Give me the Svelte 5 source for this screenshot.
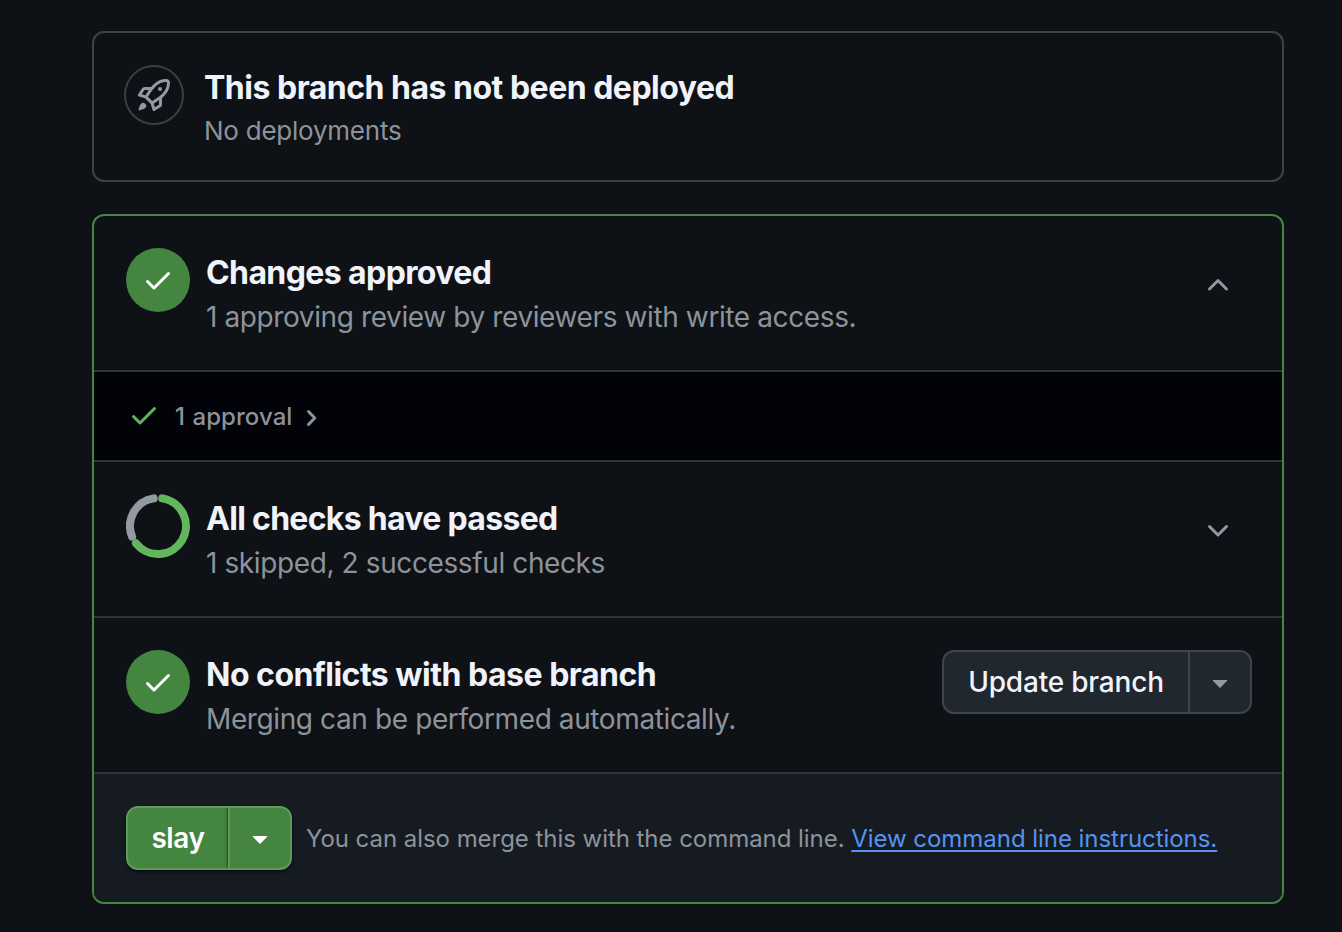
<script lang="ts">
  const check =
    'M13.78 4.22a.75.75 0 0 1 0 1.06l-7.25 7.25a.75.75 0 0 1-1.06 0L2.22 9.28a.751.751 0 0 1 .018-1.042.751.751 0 0 1 1.042-.018L6 10.94l6.72-6.72a.75.75 0 0 1 1.06 0Z';
  const rocket =
    'M14.064 0h.186C15.216 0 16 .784 16 1.75v.186a8.752 8.752 0 0 1-2.564 6.186l-.458.459c-.314.314-.641.616-.979.904v3.207c0 .608-.315 1.172-.833 1.49l-2.774 1.707a.749.749 0 0 1-1.11-.418l-.954-3.102a1.214 1.214 0 0 1-.145-.125L3.754 9.816a1.218 1.218 0 0 1-.124-.145L.528 8.717a.749.749 0 0 1-.418-1.11l1.71-2.774A1.748 1.748 0 0 1 3.31 4h3.204c.288-.338.59-.665.904-.979l.459-.458A8.749 8.749 0 0 1 14.064 0ZM8.938 3.623h-.002l-.458.458c-.76.76-1.437 1.598-2.02 2.5l-1.5 2.317 2.143 2.143 2.317-1.5c.902-.583 1.74-1.26 2.499-2.02l.459-.458a7.25 7.25 0 0 0 2.123-5.127V1.75a.25.25 0 0 0-.25-.25h-.186a7.249 7.249 0 0 0-5.125 2.123ZM3.56 14.56c-.732.732-2.334 1.045-3.005 1.148a.234.234 0 0 1-.201-.064.234.234 0 0 1-.064-.201c.103-.671.416-2.273 1.15-3.003a1.502 1.502 0 1 1 2.12 2.12Zm6.94-3.935c-.088.06-.177.118-.266.175l-2.35 1.521.548 1.783 1.949-1.2a.25.25 0 0 0 .119-.213ZM3.678 8.116 5.2 5.766c.058-.09.117-.178.176-.266H3.309a.25.25 0 0 0-.213.119l-1.2 1.95ZM12 5a1 1 0 1 1-2 0 1 1 0 0 1 2 0Z';
  const chevronUp =
    'M3.22 10.53a.749.749 0 0 1 0-1.06l4.25-4.25a.749.749 0 0 1 1.06 0l4.25 4.25a.749.749 0 1 1-1.06 1.06L8 6.811 4.28 10.53a.749.749 0 0 1-1.06 0Z';
  const chevronDown =
    'M12.78 5.22a.749.749 0 0 1 0 1.06l-4.25 4.25a.749.749 0 0 1-1.06 0L3.22 6.28a.749.749 0 1 1 1.06-1.06L8 8.939l3.72-3.719a.749.749 0 0 1 1.06 0Z';
  const triangle =
    'm4.427 7.427 3.396 3.396a.25.25 0 0 0 .354 0l3.396-3.396A.25.25 0 0 0 11.396 7H4.604a.25.25 0 0 0-.177.427Z';
</script>

{#snippet icon(d: string)}
  <svg class="icon" viewBox="0 0 16 16" width="32" height="32" aria-hidden="true"><path {d} /></svg>
{/snippet}

<main>
  <section class="card deploy">
    <span class="rocket">{@render icon(rocket)}</span>
    <div class="copy">
      <h3>This branch has not been deployed</h3>
      <p>No deployments</p>
    </div>
  </section>

  <section class="card merge">
    <div class="row">
      <span class="badge">{@render icon(check)}</span>
      <div class="copy">
        <h3 class="reviews">Changes approved</h3>
        <p>1 approving review by reviewers with write access.</p>
      </div>
      <button class="toggle" aria-label="Collapse reviews">{@render icon(chevronUp)}</button>
    </div>

    <div class="approval">
      <span class="tick">{@render icon(check)}</span>
      <span class="approval-text">1 approval</span>
      <svg class="right" viewBox="0 0 24 24" width="24" height="24" aria-hidden="true">
        <path d="M9.5 5.5 15.8 12 9.5 18.5" />
      </svg>
    </div>

    <div class="row">
      <svg class="ring" viewBox="-32 -32 64 64" width="64" height="64" aria-hidden="true">
        <path class="pass" d="M4.3 -27.67A28 28 0 1 1 -22.1 17.2" />
        <path class="skip" d="M-25.9 10.65A28 28 0 0 1 -4.3 -27.67" />
      </svg>
      <div class="copy">
        <h3 class="checks">All checks have passed</h3>
        <p>1 skipped, 2 successful checks</p>
      </div>
      <button class="toggle" aria-label="Expand checks">{@render icon(chevronDown)}</button>
    </div>

    <div class="row">
      <span class="badge">{@render icon(check)}</span>
      <div class="copy">
        <h3>No conflicts with base branch</h3>
        <p>Merging can be performed automatically.</p>
      </div>
      <div class="group update">
        <button class="main">Update branch</button>
        <button class="drop" aria-label="Update options">{@render icon(triangle)}</button>
      </div>
    </div>

    <footer>
      <div class="group slay">
        <button class="main">slay</button>
        <button class="drop" aria-label="Merge options">{@render icon(triangle)}</button>
      </div>
      <p class="cli">You can also merge this with the command line. <a href="#cli">View command line instructions.</a></p>
    </footer>
  </section>
</main>

<style>
  :global(body) {
    margin: 0;
    background: #0e1116;
  }
  main {
    box-sizing: border-box;
    width: 1342px;
    height: 932px;
    padding: 31px 58px 0 92px;
    overflow: hidden;
    background: #0e1116;
    color: #f0f4fa;
    font-family: Inter, 'Liberation Sans', sans-serif;
  }
  h3,
  p {
    margin: 0;
    white-space: nowrap;
  }
  button {
    margin: 0;
    padding: 0;
    border: 0;
    background: none;
    color: inherit;
    font: inherit;
    letter-spacing: inherit;
  }
  .icon {
    display: block;
    fill: currentColor;
  }
  .card {
    box-sizing: border-box;
    border: 2px solid #3d4249;
    border-radius: 12px;
    overflow: hidden;
  }
  .deploy {
    display: flex;
    gap: 20px;
    height: 151px;
    margin-bottom: 32px;
    padding: 32px 30px;
  }
  .rocket {
    box-sizing: border-box;
    display: grid;
    place-items: center;
    flex: none;
    width: 60px;
    height: 60px;
    border: 2px solid #3a3f46;
    border-radius: 50%;
    color: #9299a1;
  }
  .merge {
    height: 690px;
    border-color: #458740;
  }
  .row {
    box-sizing: border-box;
    display: flex;
    gap: 16px;
    height: 156px;
    padding: 32px 30px 0 32px;
    border-bottom: 2px solid #2f343a;
  }
  .badge {
    display: grid;
    place-items: center;
    flex: none;
    width: 64px;
    height: 64px;
    border-radius: 50%;
    background: #448540;
    color: #fff;
  }
  .copy {
    flex: 1;
    padding-top: 1px;
  }
  h3 {
    font-size: 32px;
    line-height: 48px;
    font-weight: 650;
    letter-spacing: -0.5px;
  }
  h3.reviews {
    letter-spacing: -0.6px;
  }
  h3.checks {
    letter-spacing: -0.7px;
  }
  .copy p {
    color: #8d939b;
    font-size: 28px;
    line-height: 40px;
    letter-spacing: -0.39px;
  }
  .deploy .copy {
    margin-top: -2px;
  }
  .deploy p {
    font-size: 26px;
    line-height: 38px;
    letter-spacing: -0.24px;
  }
  .toggle {
    width: 64px;
    height: 64px;
    padding: 9px 0 0 14px;
    color: #9299a1;
  }
  .approval {
    box-sizing: border-box;
    display: flex;
    align-items: center;
    height: 90px;
    padding-left: 34px;
    border-bottom: 2px solid #2f343a;
    background: #010308;
    color: #8d939b;
  }
  .tick {
    margin-bottom: 3px;
    color: #5fb657;
  }
  .approval-text {
    margin: 0 7px 0 15px;
    font-size: 24px;
    font-weight: 500;
    word-spacing: 1px;
    letter-spacing: 0.06px;
  }
  .right {
    margin-top: 3px;
  }
  .right path {
    fill: none;
    stroke: currentColor;
    stroke-width: 3;
    stroke-linecap: round;
    stroke-linejoin: round;
  }
  .ring {
    flex: none;
    fill: none;
    stroke-width: 8;
    stroke-linecap: round;
  }
  .pass {
    stroke: #63b65b;
  }
  .skip {
    stroke: #9299a1;
  }
  .group {
    box-sizing: border-box;
    display: flex;
    flex: none;
    height: 64px;
    border: 2px solid;
    border-radius: 12px;
    overflow: hidden;
    font-size: 28px;
  }
  .main {
    flex: 1;
  }
  .drop {
    box-sizing: border-box;
    display: grid;
    place-items: center;
    width: 62px;
    border-left: 2px solid;
  }
  .update {
    width: 310px;
    border-color: #3d444c;
    background: #21272e;
    font-weight: 500;
    letter-spacing: -0.2px;
  }
  .update .drop {
    border-color: #3d444c;
    color: #9299a1;
  }
  .slay {
    width: 166px;
    border-color: #5e9a5a;
    background: #448540;
    box-shadow: 0 2px 3px rgba(1, 4, 9, 0.6);
    color: #fff;
    font-weight: 600;
    letter-spacing: -0.4px;
  }
  .slay .drop {
    border-color: #5e9a5a;
    box-shadow: -1px 0 2px rgba(1, 4, 9, 0.5);
  }
  footer {
    box-sizing: border-box;
    display: flex;
    align-items: center;
    gap: 14px;
    height: 128px;
    padding-left: 32px;
    background: #161b22;
  }
  .cli {
    color: #8d939b;
    font-size: 24px;
    letter-spacing: -0.045px;
  }
  a {
    color: #5792f1;
    text-decoration: underline;
    text-decoration-thickness: 2px;
    text-underline-offset: 3px;
    text-decoration-skip-ink: none;
  }
</style>
